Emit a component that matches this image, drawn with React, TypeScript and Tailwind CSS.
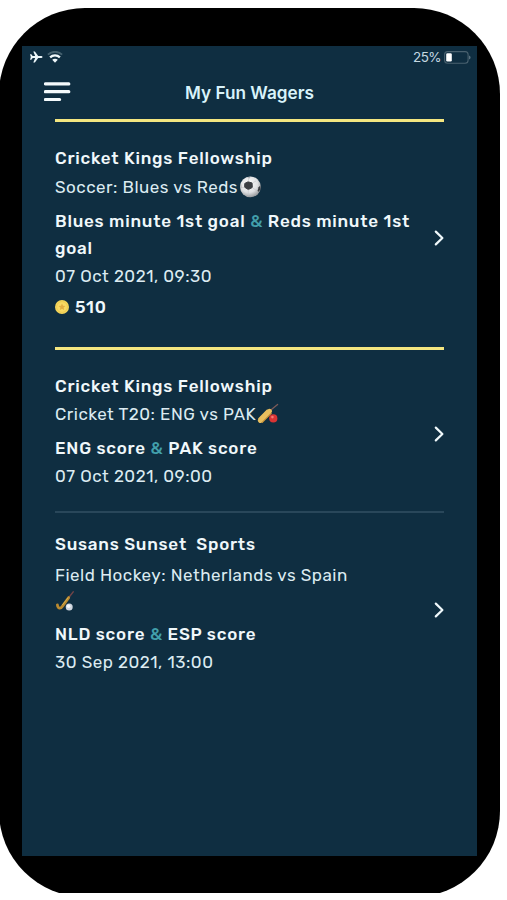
import type { ReactNode } from 'react'

interface Wager {
  id: number
  group: string
  event: string
  icon: ReactNode
  // first and second half of the bet, joined by the teal ampersand
  bet: [string, string]
  date: string
  coins?: number
  cardClass: string
  eventClass: string
  betClass: string
  arrowClass: string
}

function SoccerBall() {
  return (
    <svg viewBox="0 0 22 22" className="ml-[1px] w-[22px] h-[22px] shrink-0">
      <defs>
        <radialGradient id="ball" cx="0.42" cy="0.35" r="0.65">
          <stop offset="0" stopColor="#ffffff" />
          <stop offset="0.65" stopColor="#dfe0e2" />
          <stop offset="1" stopColor="#9b9da0" />
        </radialGradient>
      </defs>
      <circle cx="11.4" cy="10.8" r="10.4" fill="url(#ball)" />
      <path d="M9.1 5.8 13.1 7 13.3 11.5 9.3 13.5 5.6 11.2 5.8 7.4Z" fill="#3b3e43" stroke="#3b3e43" strokeLinejoin="round" />
      <path d="M19.6 11.2 21.4 9.5 21.4 13.6 19.6 15.8 18.5 15Z" fill="#3b3e43" />
      <path d="M8 1.5 11.5 1 10.2 2.4Z M1.4 9 2.2 8.2 2.6 11.7 1.6 13Z M7.6 19.6 10.8 19.8 12 21.1 9 20.8Z" fill="#a0a3a6" />
      <path d="M9.2 5.6 9.8 2.2M13.3 7 17 5M13.3 11.7 18.3 15M9.3 13.6 9.2 19.6M5.6 11.2 2.2 11.8" stroke="#c2c4c7" strokeWidth="0.6" fill="none" />
    </svg>
  )
}

function CricketBat() {
  return (
    <svg viewBox="0 0 22 22" className="ml-[1px] w-[22px] h-[22px] shrink-0">
      <path d="M13.2 7.6 20.6 1.5" stroke="#7a5a58" strokeWidth="1.3" strokeLinecap="round" />
      <path d="M3.2 17.5 12.3 8.4" stroke="#e8be5e" strokeWidth="6" />
      <path d="M3.3 17.5 12.5 8.2" stroke="#e8be5e" strokeWidth="4.8" strokeLinecap="round" />
      <path d="M5.3 19.4 14.2 10.4" stroke="#c18c36" strokeWidth="1.2" strokeLinecap="round" />
      <circle cx="16.3" cy="15.4" r="4.1" fill="#d93434" />
      <circle cx="15.4" cy="14.1" r="1.3" fill="#f87b72" />
    </svg>
  )
}

function HockeyStick() {
  return (
    <svg viewBox="0 0 20 20" className="-mt-[2px] w-5 h-5">
      <path d="M13.4 7 18.2.9" stroke="#714448" strokeWidth="1.5" strokeLinecap="round" />
      <path d="M13.7 6.6 7.2 15.6C5.8 17.8 2.9 17.9 2.4 13.8" stroke="#b98a30" strokeWidth="2.8" strokeLinecap="round" fill="none" />
      <path d="M13.2 6.6 7.4 14" stroke="#dcb856" strokeWidth="0.8" />
      <circle cx="14.2" cy="16.1" r="3.5" fill="#cfd6df" />
      <circle cx="13.6" cy="15.2" r="1.8" fill="#f7f9fb" />
    </svg>
  )
}

function Coin() {
  return (
    <svg viewBox="0 0 14 14" className="w-[14px] h-[14px]">
      <circle cx="7" cy="7" r="7" fill="#f3d65a" />
      <circle cx="7" cy="7" r="5.3" fill="#f8da63" stroke="#edc54e" strokeWidth="0.7" />
      <path d="M7 3.6 8 5.8 10.4 6 8.6 7.6 9.1 10 7 8.7 4.9 10 5.4 7.6 3.6 6 6 5.8Z" fill="#e3ae42" />
    </svg>
  )
}

function Chevron({ className }: { className: string }) {
  return (
    <svg viewBox="0 0 10 16" className={`w-[10px] h-4 shrink-0 ${className}`} fill="none">
      <path d="M1.8 1.6 8.4 8 1.8 14.4" stroke="#eff8fb" strokeWidth="2.2" strokeLinecap="round" strokeLinejoin="round" />
    </svg>
  )
}

const wagers: Wager[] = [
  {
    id: 1,
    group: 'Cricket Kings Fellowship',
    event: 'Soccer: Blues vs Reds',
    icon: <SoccerBall />,
    bet: ['Blues minute 1st goal', 'Reds minute 1st goal'],
    date: '07 Oct 2021, 09:30',
    coins: 510,
    cardClass: 'h-[228px] border-t-[3px] border-[#f4e680] pt-[22px]',
    eventClass: 'mt-[1px] h-7',
    betClass: 'mt-[6.5px]',
    arrowClass: 'mt-[11px]',
  },
  {
    id: 2,
    group: 'Cricket Kings Fellowship',
    event: 'Cricket T20: ENG vs PAK',
    icon: <CricketBat />,
    bet: ['ENG score', 'PAK score'],
    date: '07 Oct 2021, 09:00',
    cardClass: 'h-[164px] border-t-[3px] border-[#f4e680] pt-[22px]',
    eventClass: 'h-[29px]',
    betClass: 'mt-[6px]',
    arrowClass: 'mt-[5px]',
  },
  {
    id: 3,
    group: 'Susans Sunset  Sports',
    event: 'Field Hockey: Netherlands vs Spain',
    icon: <HockeyStick />,
    bet: ['NLD score', 'ESP score'],
    date: '30 Sep 2021, 13:00',
    cardClass: 'border-t-2 border-[#29475a] pt-[17px]',
    eventClass: 'mt-[3px] h-[54px] flex-col items-start',
    betClass: 'mt-[6px]',
    arrowClass: 'mt-[13px]',
  },
]

function StatusBar() {
  return (
    <div className="flex items-center h-[22px] pl-2 pr-[6px] pt-[1px]">
      <svg viewBox="0 0 13 12" className="w-[13px] h-3 -mt-[1px]" fill="#edf7fa">
        <path d="M0 3.2H1.3L2.7 5H5.2L3.3.6H4.9L8.2 5H11.3C12.9 5 12.9 7 11.3 7H8.2L4.9 11.4H3.3L5.2 7H2.7L1.3 8.8H0L.8 6Z" />
      </svg>
      <svg viewBox="0 0 16 12" className="w-4 h-3 ml-[4px] -mt-[1px]" fill="none">
        <path d="M.9 3.7C4.9-.2 11.1-.2 15.1 3.7" stroke="#45616f" strokeWidth="1.8" />
        <path d="M3.1 6.3C5.9 3.6 10.1 3.6 12.9 6.3" stroke="#f0f8fb" strokeWidth="2.3" />
        <path d="M5.2 8.8C6.8 7.4 9.2 7.4 10.8 8.8L8 11.8Z" fill="#f0f8fb" />
      </svg>
      <span className="ml-auto -mt-[2px] text-[13.5px] leading-[22px] tracking-[-0.6px] font-['Inter'] text-[#c5d8e1]">25%</span>
      <svg viewBox="0 0 27 13" className="w-[27px] h-[13px] ml-[3px] -mt-[1px]">
        <rect x="0.6" y="0.6" width="23.5" height="11.6" rx="3" fill="none" stroke="#49616f" strokeWidth="1.1" />
        <rect x="2.2" y="2.2" width="5.6" height="8.4" rx="1.3" fill="#fff" />
        <path d="M25.3 4.4C26.8 5 26.8 7.8 25.3 8.4Z" fill="#7b909c" />
      </svg>
    </div>
  )
}

function WagerCard({ wager }: { wager: Wager }) {
  return (
    <div className={wager.cardClass}>
      <div className="flex items-center">
        <div className="w-[379px] shrink-0 text-[17px] leading-[28px] tracking-[0.5px] text-[#dcebf1]">
          <h2 className="font-medium whitespace-pre tracking-[0.77px] text-[#f0f8fb]">{wager.group}</h2>
          <div className={`flex ${wager.eventClass}`}>
            <span>{wager.event}</span>
            <span className="flex h-7 items-center">{wager.icon}</span>
          </div>
          <p className={`font-medium leading-[27.5px] tracking-[0.77px] w-[366px] text-[#f0f8fb] ${wager.betClass}`}>
            {wager.bet[0]} <span className="text-[#429fab]">&amp;</span> {wager.bet[1]}
          </p>
          <p className="leading-[27.5px]">{wager.date}</p>
          {wager.coins && (
            <div className="flex items-center gap-[6px] mt-[2.5px]">
              <Coin />
              <span className="font-medium tracking-[0.77px] text-[#f0f8fb]">{wager.coins}</span>
            </div>
          )}
        </div>
        <Chevron className={wager.arrowClass} />
      </div>
    </div>
  )
}

export default function App() {
  return (
    <div className="w-[507px] h-[900px] bg-white pt-2 overflow-hidden font-['Rubik','Roboto',sans-serif]">
      <div className="h-[885px] overflow-hidden">
        <div className="-ml-[1px] w-[501px] h-[889px] rounded-[86px] bg-black pt-[38px] pl-[23px]">
          <div className="w-[455px] h-[810px] bg-[#0f2e41]">
            <StatusBar />
            <header className="flex items-center h-[51px] pl-[22px]">
              <svg viewBox="0 0 27 20" className="w-[27px] h-5 -mt-[4px]" stroke="#f4fafc" strokeWidth="3.2" strokeLinecap="round">
                <path d="M1.4 1.9H24.8M1.4 9.7H24.8M1.4 17.5H15.6" />
              </svg>
              <h1 className="ml-[114px] -mt-[2px] text-[17.2px] font-semibold font-['Inter'] text-[#d8f3fa]">My Fun Wagers</h1>
            </header>
            <main className="ml-[33px] w-[389px]">
              {wagers.map((wager) => (
                <WagerCard key={wager.id} wager={wager} />
              ))}
            </main>
          </div>
        </div>
      </div>
    </div>
  )
}
